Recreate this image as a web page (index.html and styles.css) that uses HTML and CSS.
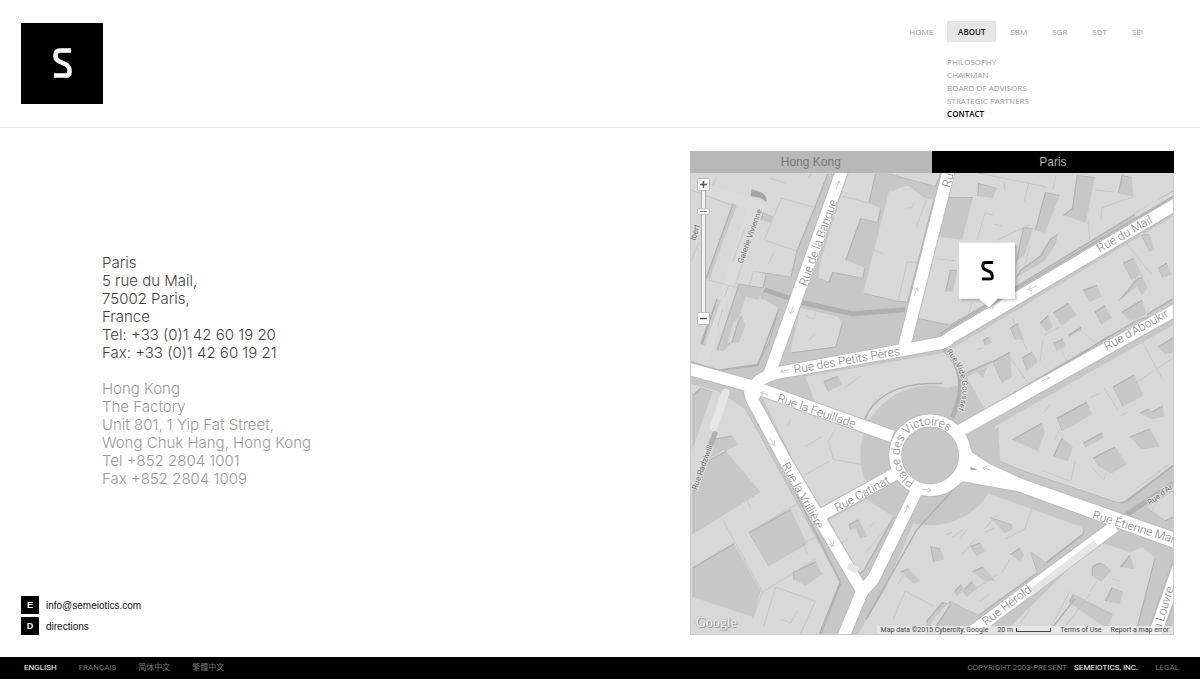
FILE: index.html
```html
<!DOCTYPE html>
<html lang="en">
<head>
    <meta charset="UTF-8">
    <meta name="viewport" content="width=device-width, initial-scale=1.0">
    <title>Semeiotics - Contact</title>
    <link rel="stylesheet" href="styles.css">
</head>
<body>
    <header class="header">
        <a href="#" class="logo" aria-label="Semeiotics">
            <svg viewBox="0 0 19 30" width="19" height="30"><path class="s-mark" d="M18 2.5H7Q2.500 2.500 2.500 7V8.500C2.500 11 4 12.300 6.500 13.500L12 16C15.300 17.600 16.500 19.300 16.500 22.500V24.500Q16.500 27.500 13.500 27.500H1"/></svg>
        </a>
        <nav>
            <ul class="menu">
                <li><a href="#">HOME</a></li>
                <li>
                    <a href="#" class="active">ABOUT</a>
                    <ul class="submenu">
                        <li><a href="#">PHILOSOPHY</a></li>
                        <li><a href="#">CHAIRMAN</a></li>
                        <li><a href="#">BOARD OF ADVISORS</a></li>
                        <li><a href="#">STRATEGIC PARTNERS</a></li>
                        <li><a href="#" class="current">CONTACT</a></li>
                    </ul>
                </li>
                <li><a href="#">SBM</a></li>
                <li><a href="#">SGR</a></li>
                <li><a href="#">SDT</a></li>
                <li><a href="#">SEI</a></li>
            </ul>
        </nav>
    </header>

    <main class="content">
        <section class="info">
            <div class="addresses">
                <address>
                    Paris<br>
                    5 rue du Mail,<br>
                    75002 Paris,<br>
                    France<br>
                    Tel: +33 (0)1 42 60 19 20<br>
                    Fax: +33 (0)1 42 60 19 21
                </address>
                <address class="muted">
                    Hong Kong<br>
                    The Factory<br>
                    Unit 801, 1 Yip Fat Street,<br>
                    Wong Chuk Hang, Hong Kong<br>
                    Tel +852 2804 1001<br>
                    Fax +852 2804 1009
                </address>
            </div>
            <div class="links">
                <a href="#"><span class="key">E</span>info@semeiotics.com</a>
                <a href="#"><span class="key">D</span>directions</a>
            </div>
        </section>

        <section class="location">
            <div class="tabs">
                <button type="button">Hong Kong</button>
                <button type="button" class="selected">Paris</button>
            </div>
            <div class="map">
                <svg class="map-canvas" viewBox="690 173 484 462" preserveAspectRatio="xMidYMid slice">
                    <!-- city blocks, the inner rings are courtyards -->
                    <g class="buildings">
                        <path d="M690 173H827L814 207L796 251L790 277L753 271L765 275L760 298L778 308L768 342L757 364L718 370L690 362Z
                            M732 203L736 206L715 262L709 280L705 278Z
                            M762 212L773 217L770 223L760 220Z
                            M727 343L733 322L741 316L745 326L738 343Z
                            M738 284L764 288L758 300L745 297L730 345L722 352L716 350Z"/>
                        <path d="M848 173H875L868 203L880 208L877 222L860 218L845 260L864 268L862 278L832 272L828 282L818 278L820 262L840 198Z"/>
                        <path d="M889 190Q895 192 899 188Q908 183 914 190L923 197L933 200L907 302L897 301L863 293Z"/>
                        <path d="M887 173H940L935 186Z"/>
                        <path d="M800 308L838 317L842 322L835 347L790 353Z"/>
                        <path d="M955 173H1174V190L1000 296L950 325L917 318L924 280Z
                            M947 197L973 197L962 240L937 237Z
                            M978 183L997 188L993 198L977 196Z
                            M1045 192L1060 195L1045 233L1035 230Z
                            M1077 175L1095 177L1086 223L1063 215L1072 208Z
                            M1122 175L1132 177L1134 197L1118 193Z
                            M1023 227L1033 228L1025 255L1016 262Z
                            M950 270L957 270L953 292L945 292Z
                            M1050 239L1058 234L1056 244L1045 261L1016 278L1020 270L1040 256Z
                            M1135 213L1174 191V197L1136 219Z"/>
                        <path d="M950 350L1174 216V298L985 410L965 375Z
                            M1123 263L1134 258L1143 277L1132 280Z
                            M1083 290L1097 285L1102 297L1090 302Z
                            M1132 285L1140 273L1148 288L1143 295L1137 287L1118 302Z
                            M1158 268L1167 263L1172 275L1163 278Z
                            M1140 233L1150 235L1155 250L1150 252Z
                            M1053 313L1068 303L1077 315L1062 326Z
                            M1040 323L1048 315L1053 327L1047 332Z
                            M1095 312L1105 305L1112 318L1102 325Z
                            M1122 312L1142 300L1148 317L1130 321Z
                            M1053 343L1063 339L1066 347L1057 351Z
                            M1022 358L1032 352L1038 362L1027 372Z
                            M992 362L1010 352L1012 378L1002 383Z
                            M1010 328L1018 323L1024 340L1015 340Z
                            M983 340L988 337L992 343L985 346Z
                            M977 372L987 368L983 378Z
                            M1068 335L1081 327L1082 330L1070 337Z
                            M961 375L992 361V364L966 378Z"/>
                        <path d="M995 427L1174 325V465L1126 501Q1121 505 1115 502L1020 470L997 460Z
                            M1012 440L1042 423L1045 433L1038 452Z
                            M1057 418L1087 402L1092 415L1062 432Z
                            M1113 387L1134 375L1144 396L1123 407Z
                            M1062 438L1073 448L1068 462L1053 457Z
                            M1083 443L1102 433L1104 438L1086 448Z
                            M1093 458L1115 447L1127 465L1112 474L1100 468Z
                            M1130 437L1150 429L1160 447L1142 450Z
                            M1140 413L1149 409L1152 412L1163 406L1165 417L1152 420Z
                            M1158 347L1174 337V353L1166 355Z"/>
                        <path d="M805 377L940 354L950 352L966 385L955 400L863 422L815 404Z
                            M823 382L837 376L842 385L828 392Z"/>
                        <path d="M762 398L880 440L890 470L818 512Z"/>
                        <path d="M825 523L866 500L893 517L863 571L853 578Z
                            M848 525L858 520L867 537L860 539L856 529L850 531Z"/>
                        <path d="M690 384L718 392L745 410L840 583L820 635H690Z
                            M707 460L724 450L760 493L692 535V492Z
                            M748 533L790 510L807 545L768 567Z
                            M692 568L733 544L760 592L753 618L692 598Z
                            M792 573L815 562L822 575L805 587L793 580Z
                            M700 388L712 392L692 450V395Z
                            M709 440L731 436L738 445L704 462Z"/>
                        <path d="M985 493L1080 527Q1086 531 1082 535L1046 563L1030 552L1037 573L978 616L950 602L935 618L925 635H858L885 590L915 520Z
                            M990 518L1012 525L1013 530L1005 534Z
                            M970 547L980 543L985 552L977 557Z
                            M1010 555L1020 548L1024 556L1020 562Z
                            M930 547L940 549L944 560L933 563Z
                            M972 572L983 567L995 582L985 582Z
                            M962 592L972 582L977 589L967 598Z
                            M900 572L908 569L920 582L914 585Z
                            M954 592L961 585L964 590L957 597Z
                            M942 603L950 605L940 620L930 635L926 622Z"/>
                        <path d="M1097 542L1130 553L1143 548L1155 558L1137 628L1134 635H1003Z
                            M1092 568Q1101 558 1111 572L1101 583L1092 576Z
                            M1120 568L1130 555L1135 570Z
                            M1105 602L1112 588L1123 593L1120 605Z
                            M1073 595L1113 615L1108 630L1069 603Z"/>
                        <path d="M1147 508L1174 492V517L1165 521Z"/>
                    </g>

                    <circle class="plaza" cx="930" cy="456" r="70"/>
                    <path class="ground" d="M962 385L985 410L962 428L940 390ZM999 427L998 462L975 448Z"/>

                    <g class="passages">
                        <path d="M764 290L803 303L852 314L905 310"/>
                        <path d="M718 300L702 345"/>
                        <path d="M715 432L694 490"/>
                        <path d="M1120 520L1174 484"/>
                        <path d="M943 348Q973 375 952 418"/>
                    </g>
                    <path class="arcade" d="M725 393L713 428"/>
                    <path class="arcade wide" d="M690 184L760 207M752 208L698 374"/>
                    <path class="dark" d="M751 189L762 193Q767 197 766 202L760 198L750 196Z"/>

                    <!-- roof lines -->
                    <path class="roof" d="M690 190L736 207M769 178L785 183M808 178L814 168M781 198L812 207M781 198L764 240M766 241L796 251M773 253L768 264M753 271L748 289M716 177L712 186M698 243L690 262M706 280L742 289M724 297L728 286M722 310L717 327M744 230L732 262M750 240L735 285M908 208Q913 209 914 202M926 200L916 228M873 250L883 254M907 262L898 301M907 262L923 264M842 196L868 203M805 315Q815 325 815 312M809 340L814 335M978 173L1047 187M1004 182L1005 191M1029 183L1024 202M1056 176L1053 190M985 213L977 240M985 213L993 215M993 224L1002 226M997 240L1030 225M1030 245L1024 270M1095 190L1114 192M1101 220L1102 208L1133 197M1088 220L1090 240M936 259L955 261M972 303L968 315M1120 235L1152 275M1012 318L1027 350M1043 341L1040 362M1008 355L1028 383M1062 352L1074 375M1080 330L1098 345M1045 335L1060 327M977 350L983 348M1143 343L1163 380M1104 388L1118 410M1060 430L1055 440M1045 412L1050 405M1090 398L1100 394M1120 417L1128 413M1135 384L1174 358M1042 471L1071 482L1075 463M1093 469L1104 481L1106 474M1135 490L1168 466M843 389L861 376M815 403L864 422M866 420Q870 402 883 394M790 420L788 426M805 447L822 437M835 430L828 442L833 460L860 465M805 475L829 462M748 533L796 505M746 500L750 508M722 520L735 544L762 593L815 560M802 545L825 532M801 540L807 555M762 593L752 620M775 588L815 602L800 635M775 588L763 628M780 620L790 624L797 612M839 545L848 540M870 527L875 523M866 553L895 517M994 529L985 533M984 530L997 516M960 540L967 530M952 538L964 530M945 536L952 533M1032 508L1025 530L1005 540M962 555L975 540M975 590L998 575M1002 573L1010 560M980 602L990 595M1010 605L1040 590M1018 608L1038 595M1050 630L1070 592M1065 628L1090 595M1097 582L1090 593M1112 580L1120 582M1020 625L1030 610M1150 515L1165 490M893 620L905 592L933 607M898 585L903 576"/>
                    <path class="edge" d="M690 362L718 371L757 366L777 313M940 334L1174 196M985 411L1078 357L1110 336M752 407L840 583L819 635M961 482L917 530L866 620M1047 563L1083 535M1127 502L1174 466M1050 632L1075 600M864 420Q880 385 930 384H942M825 506L856 489"/>

                    <!-- streets -->
                    <g class="streets-edge">
                        <path d="M843 167L769 374"/>
                        <path d="M950 165L904 347"/>
                        <path d="M753 398L755 385Q762 375 790 371L938 344Q945 343 950 338L1180 202"/>
                        <path d="M680 367L752 387L892 437"/>
                        <path d="M750 388Q748 396 756 408L784 460L862 592L842 640"/>
                        <path d="M822 515L898 473"/>
                        <path d="M862 592L873 580L917 490"/>
                        <path d="M960 431L1180 308"/>
                        <path d="M1115 527L965 638"/>
                        <circle cx="930" cy="456" r="35"/>
                    </g>
                    <path class="avenue" d="M966 440L972 453L990 465L1023 480L1180 535V551L1018 492L963 482L950 488L962 470ZM1176 555L1147 637H1162L1176 599Z"/>
                    <g class="streets">
                        <path d="M843 167L769 374"/>
                        <path d="M950 165L904 347"/>
                        <path d="M753 398L755 385Q762 375 790 371L938 344Q945 343 950 338L1180 202"/>
                        <path d="M680 367L752 387L892 437"/>
                        <path d="M750 388Q748 396 756 408L784 460L862 592L842 640"/>
                        <path d="M822 515L898 473"/>
                        <path d="M862 592L873 580L917 490"/>
                        <path d="M960 431L1180 308"/>
                        <path d="M1115 527L965 638"/>
                        <circle cx="930" cy="456" r="35"/>
                    </g>
                    <path class="avenue-fill" d="M966 440L972 453L990 465L1023 480L1180 535V551L1018 492L963 482L950 488L962 470Z"/>
                    <path class="dark" d="M970 468L978 470L971 471Z"/>
                    <path class="arcade thick" d="M1096 544L1030 594M848 566L857 572"/>

                    <!-- one way arrows -->
                    <g class="arrows">
                        <path d="M836 189l3-8m-4 3l4-3l1 4"/>
                        <path d="M914 296l3-8m-4 3l4-3l1 4"/>
                        <path d="M790 314l3-8m-5 4l2 4l4-3"/>
                        <path d="M789 370l-9 2m3-3l-3 3l4 1"/>
                        <path d="M768 396l-8-3m4-1l-4 1l2 3"/>
                        <path d="M769 438l5 8m-5-2l5 2v-5"/>
                        <path d="M828 539l5 8m-5-2l5 2v-5"/>
                        <path d="M904 514l4-8m-4 3l4-3l1 4"/>
                        <path d="M922 490l9 1m-3-2l3 2l-4 2"/>
                        <path d="M1037 286l-9 4m3-4l-3 4l4 1"/>
                        <path d="M1041 382l9-4m-4-1l4 1l-3 3"/>
                        <path d="M991 471l-8-3m4-1l-4 1l2 3"/>
                    </g>

                    <!-- street names -->
                    <g class="names">
                        <text transform="translate(806 287) rotate(-70)">Rue de la Banque</text>
                        <text transform="translate(950 188) rotate(-76)">Rue</text>
                        <text transform="translate(1100 253) rotate(-30)">Rue du Mail</text>
                        <text transform="translate(1107 351) rotate(-29)">Rue d’Aboukir</text>
                        <text transform="translate(794 374) rotate(-10)">Rue des Petits Pères</text>
                        <text transform="translate(776 402) rotate(19)">Rue la Feuillade</text>
                        <text transform="translate(781 466) rotate(61)">Rue la Vrillière</text>
                        <text transform="translate(837 513) rotate(-29)">Rue Catinat</text>
                        <text transform="translate(1092 519) rotate(17)">Rue Étienne Marc</text>
                        <text transform="translate(986 627) rotate(-37)">Rue Hérold</text>
                        <text transform="translate(1161 632) rotate(-73)">u Louvre</text>
                        <path id="place" d="M915 482A30 30 0 1 1 952 436" fill="none"/>
                        <text><textPath href="#place">Place des Victoires</textPath></text>
                    </g>
                    <g class="names small">
                        <text transform="translate(742 264) rotate(-70)">Galerie Vivienne</text>
                        <text transform="translate(695 241) rotate(-76)">lbert</text>
                        <text transform="translate(696 491) rotate(-70)">Rue Radziwill</text>
                        <text transform="translate(1150 506) rotate(-36)">Rue d’Ar</text>
                        <path id="gousset" d="M946 352Q974 385 954 418" fill="none"/>
                        <text><textPath href="#gousset">Rue Vide Gousset</textPath></text>
                    </g>

                    <!-- office marker -->
                    <g class="marker">
                        <path d="M959 243H1015V299H998L989 308L979 299H959Z"/>
                        <svg x="981" y="261" width="13" height="20" viewBox="0 0 19 30"><path class="s-mark dark-mark" d="M18 2.5H7Q2.500 2.500 2.500 7V8.500C2.500 11 4 12.300 6.500 13.500L12 16C15.300 17.600 16.500 19.300 16.500 22.500V24.500Q16.500 27.500 13.500 27.500H1"/></svg>
                    </g>
                </svg>

                <div class="zoom">
                    <button type="button" aria-label="Zoom in"><svg viewBox="0 0 7 7" width="7" height="7"><path d="M0 3.500H7M3.500 0V7"/></svg></button>
                    <input type="range" min="0" max="20" value="17" aria-label="Zoom level">
                    <button type="button" aria-label="Zoom out"><svg viewBox="0 0 7 7" width="7" height="7"><path d="M0 3.500H7"/></svg></button>
                </div>
                <a href="#" class="google">Google</a>
                <div class="credits">
                    <span>Map data ©2015 Cybercity, Google</span>
                    <span class="scale">20 m <i></i></span>
                    <a href="#">Terms of Use</a>
                    <a href="#">Report a map error</a>
                </div>
            </div>
        </section>
    </main>

    <footer class="footer">
        <div class="languages">
            <a href="#" class="on">ENGLISH</a>
            <a href="#">FRANÇAIS</a>
            <a href="#" lang="zh-Hans">简体中文</a>
            <a href="#" lang="zh-Hant">繁體中文</a>
        </div>
        <div class="legal">
            <span>COPYRIGHT 2003-PRESENT</span>
            <span class="on">SEMEIOTICS, INC.</span>
            <a href="#">LEGAL</a>
        </div>
    </footer>
</body>
</html>
```
FILE: styles.css
```css
* {
    box-sizing: border-box;
}

body {
    margin: 0;
    min-height: 100vh;
    display: flex;
    flex-direction: column;
    background-color: #fff;
    font-family: "Liberation Sans", "Noto Sans CJK SC", Arial, sans-serif;
}

a {
    color: inherit;
    text-decoration: none;
}

ul {
    list-style: none;
    margin: 0;
    padding: 0;
}

button {
    font-family: inherit;
    border: none;
    padding: 0;
    cursor: pointer;
}

/* header */
.header {
    display: flex;
    justify-content: space-between;
    align-items: flex-start;
    padding: 23px 46px 23px 21px;
    border-bottom: 1px solid #e6e6e6;
}

.logo {
    display: flex;
    align-items: center;
    justify-content: center;
    width: 82px;
    height: 81px;
    padding-bottom: 2px;
    background-color: #000;
}

.s-mark {
    fill: none;
    stroke: #fff;
    stroke-width: 4.5;
}

.s-mark.dark-mark {
    stroke: #000;
}

.menu {
    display: flex;
    gap: 3px;
    margin-top: -2px;
    font-family: "Open Sans", sans-serif;
    font-size: 8px;
    color: #999;
}

.menu > li {
    position: relative;
}

.menu > li > a {
    display: block;
    padding: 0 11px;
    line-height: 21px;
}

.menu > li > a.active {
    background-color: #e6e6e6;
    color: #111;
    font-weight: 600;
}

.submenu {
    position: absolute;
    top: 34px;
    left: 0;
    line-height: 13px;
    white-space: nowrap;
}

.submenu .current {
    color: #000;
    font-weight: 600;
}

/* content */
.content {
    flex: 1;
    display: grid;
    grid-template-columns: 1fr 42%;
    padding: 23px 26px 22px 21px;
}

.info {
    display: flex;
    flex-direction: column;
}

.addresses {
    flex: 1;
    display: flex;
    flex-direction: column;
    justify-content: center;
    gap: 18px;
    padding: 0 0 6px 81px;
    font-family: Inter, "Liberation Sans", sans-serif;
    font-size: 15px;
    font-weight: 300;
    line-height: 18px;
    color: #444;
}

address {
    font-style: normal;
}

.muted {
    color: #999;
}

.links {
    display: flex;
    flex-direction: column;
    align-items: flex-start;
    gap: 3px;
    font-size: 10px;
    color: #111;
}

.links a {
    display: flex;
    align-items: center;
    gap: 7px;
}

.key {
    width: 18px;
    line-height: 18px;
    background-color: #000;
    color: #fff;
    font-size: 9px;
    font-weight: bold;
    text-align: center;
}

/* map */
.location {
    display: flex;
    flex-direction: column;
}

.tabs {
    display: flex;
}

.tabs button {
    flex: 1;
    height: 22px;
    background-color: #b8b8b8;
    color: #777;
    font-size: 12px;
}

.tabs button.selected {
    background-color: #000;
    color: #aaa;
}

.map {
    position: relative;
    flex: 1;
    min-height: 462px;
    overflow: hidden;
    background-color: #c7c7c7;
    border: 1px solid #ccc;
    border-top: none;
}

.map-canvas {
    position: absolute;
    width: 100%;
    height: 100%;
}

.buildings {
    fill: #d8d8d8;
    fill-rule: evenodd;
    filter: drop-shadow(1px 1px 0 #b2b2b2);
}

.plaza {
    fill: #c7c7c7;
}

.ground {
    fill: #c7c7c7;
}

.passages {
    fill: none;
    stroke: #b0b0b0;
    stroke-width: 5;
}

.arcade {
    fill: none;
    stroke: #e6e6e6;
    stroke-width: 8;
    stroke-linecap: round;
}

.arcade.wide {
    stroke: #dedede;
    stroke-opacity: 0.6;
    stroke-width: 10;
}

.arcade.thick {
    stroke-width: 7;
    stroke-linecap: butt;
}

.dark {
    fill: #a5a5a5;
}

.roof {
    fill: none;
    stroke: #c2c2c2;
    stroke-width: 0.8;
}

.edge {
    fill: none;
    stroke: #b0b0b0;
    stroke-width: 1.5;
}

.streets,
.streets-edge {
    fill: none;
    stroke: #fff;
    stroke-width: 12;
}

.streets-edge {
    stroke: #bcbcbc;
    stroke-width: 14;
}

.avenue {
    fill: #fff;
    stroke: #bcbcbc;
    stroke-width: 2;
}

.avenue-fill {
    fill: #fff;
}

.arrows {
    fill: none;
    stroke: #ccc;
    stroke-width: 1;
}

.names {
    fill: #808080;
    stroke: #fff;
    stroke-width: 1;
    paint-order: stroke;
    font-family: Roboto, sans-serif;
    font-size: 12px;
    font-weight: 300;
}

.names path {
    stroke: none;
}

.names.small {
    fill: #707070;
    stroke: #e0e0e0;
    stroke-width: 2;
    font-size: 8px;
    font-weight: 400;
}

.marker {
    fill: #fff;
    filter: drop-shadow(2px 2px 1px rgba(0, 0, 0, 0.2));
}

.zoom {
    position: absolute;
    top: 5px;
    left: 6px;
    display: flex;
    flex-direction: column;
    align-items: center;
}

.zoom button {
    display: flex;
    align-items: center;
    justify-content: center;
    width: 13px;
    height: 13px;
    background-color: #fff;
    border: 1px solid #bbb;
    border-radius: 2px;
}

.zoom svg {
    stroke: #555;
    stroke-width: 1.5;
}

.zoom input {
    appearance: none;
    writing-mode: vertical-lr;
    direction: rtl;
    width: 13px;
    height: 121px;
    margin: 0;
    background: linear-gradient(to right, transparent 4px, #aaa 4px 5px, #f4f4f4 5px 8px, #aaa 8px 9px, transparent 9px);
}

.zoom input::-webkit-slider-thumb {
    appearance: none;
    width: 13px;
    height: 7px;
    background: linear-gradient(#888, #888) center / 7px 1px no-repeat #fff;
    border: 1px solid #bbb;
    border-radius: 2px;
}

.google {
    position: absolute;
    left: 5px;
    bottom: 2px;
    font-family: "Liberation Serif", serif;
    font-size: 14px;
    line-height: 18px;
    color: #fff;
    text-shadow: 0 0 1px #777, 1px 1px 1px #888;
}

.credits {
    position: absolute;
    right: 0;
    bottom: 0;
    display: flex;
    gap: 9px;
    padding: 0 4px;
    background-color: rgba(240, 240, 240, 0.7);
    font-family: Roboto, sans-serif;
    font-size: 7px;
    line-height: 8px;
    color: #444;
}

.scale {
    display: flex;
    align-items: center;
    gap: 3px;
}

.scale i {
    width: 35px;
    height: 4px;
    border: 1px solid #444;
    border-top: none;
}

/* footer */
.footer {
    display: flex;
    justify-content: space-between;
    padding: 0 21px 0 24px;
    background-color: #000;
    font-family: Roboto, "Noto Sans CJK SC", sans-serif;
    font-size: 8px;
    line-height: 22px;
    color: #777;
}

.languages {
    display: flex;
    gap: 22px;
}

.legal {
    display: flex;
    gap: 7px;
}

.legal a {
    margin-left: 10px;
}

.on {
    color: #fff;
}
```
